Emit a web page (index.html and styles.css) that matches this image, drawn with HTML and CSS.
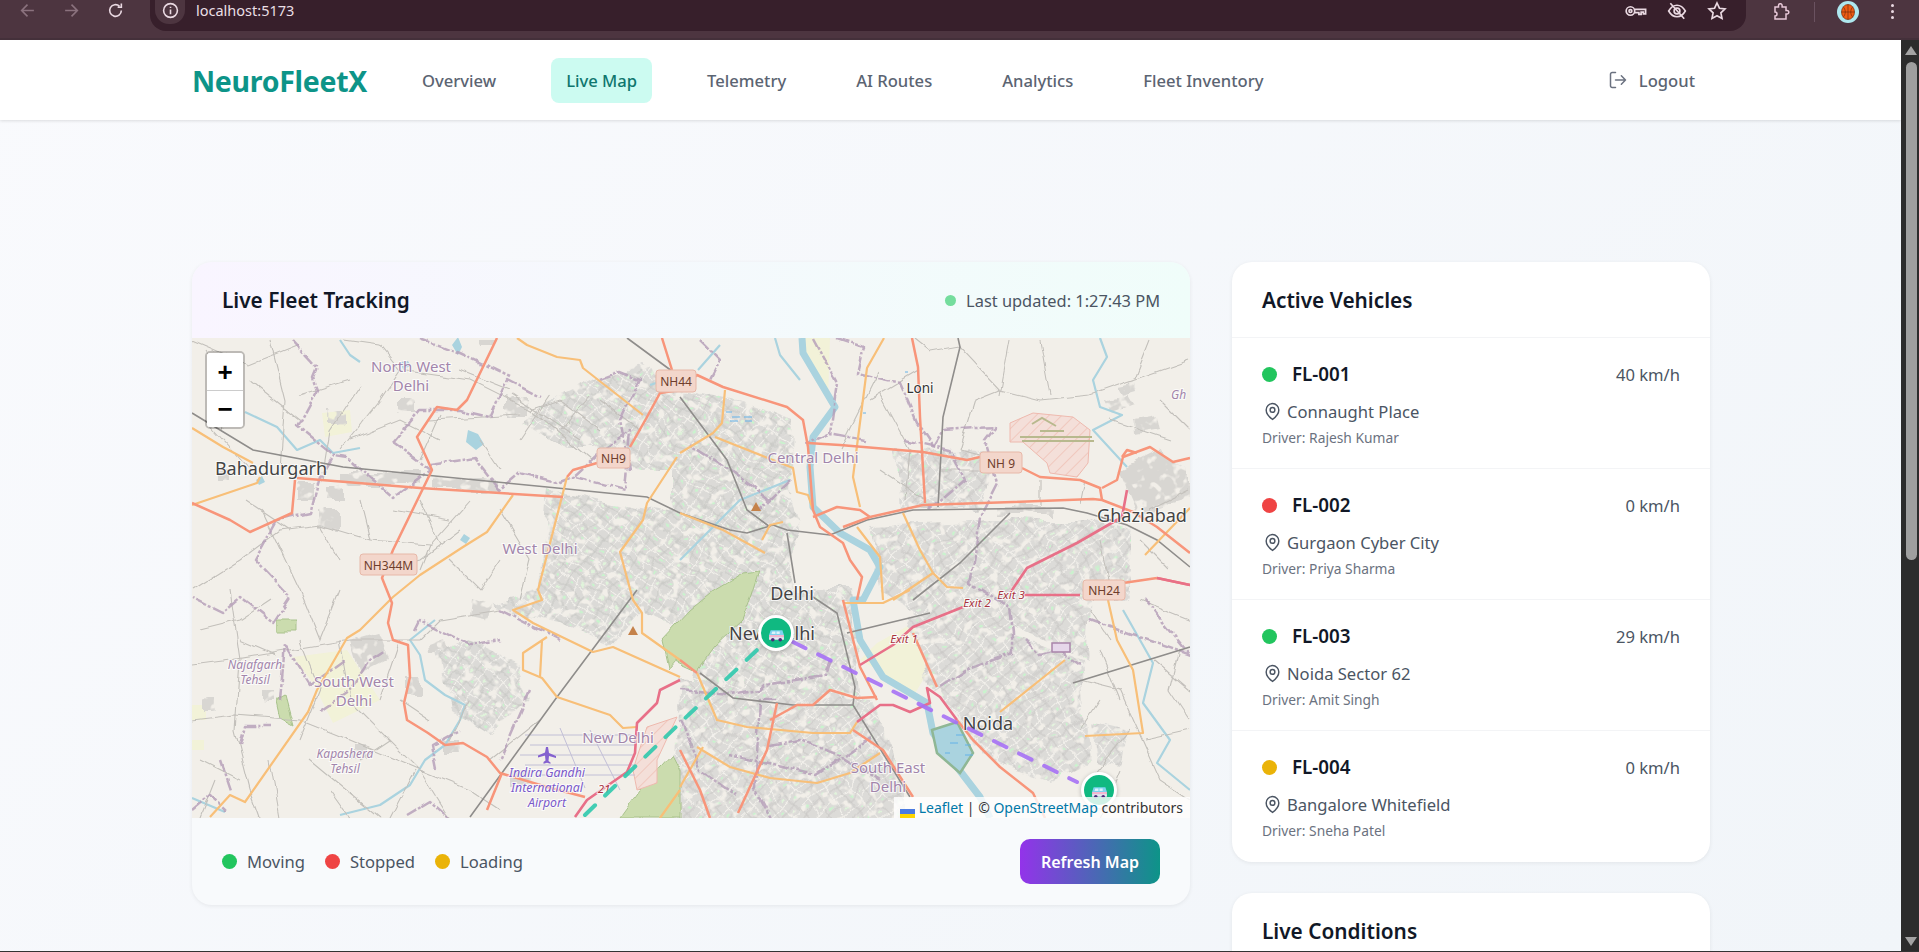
FILE: index.html
```html
<!DOCTYPE html>
<html lang="en">
<head>
<meta charset="utf-8">
<title>NeuroFleetX</title>
<link rel="stylesheet" href="styles.css">
</head>
<body>
<div class="window">
  <div class="browser">
    <div class="browser-nav">
      <svg class="b-icon dim" viewBox="0 0 16 16"><path d="M14 8H2.500M8 2.500 2.500 8 8 13.500"/></svg>
      <svg class="b-icon dim" viewBox="0 0 16 16"><path d="M2 8h11.500M8 2.500 13.500 8 8 13.500"/></svg>
      <svg class="b-icon" viewBox="0 0 16 16"><path d="M13.500 8a5.500 5.500 0 1 1-1.700-4M13.500 1.500v3.500H10"/></svg>
    </div>
    <div class="omnibox">
      <span class="info-chip"><svg class="b-icon" viewBox="0 0 16 16"><circle cx="8" cy="8" r="6.500"/><path d="M8 7v4.500M8 4.400v1.200"/></svg></span>
      <span class="url">localhost:5173</span>
      <span class="omni-icons">
        <svg class="b-icon key" viewBox="0 0 20 16"><circle cx="5.500" cy="8" r="3.800"/><circle cx="5.500" cy="8" r="1.300"/><path d="M9.300 6.500H19v4h-2V9h-2v2h-2V9.500H9.300"/></svg>
        <svg class="b-icon wide" viewBox="0 0 18 18"><path d="M1.500 9S4.500 3.800 9 3.800 16.500 9 16.500 9 13.500 14.200 9 14.200 1.500 9 1.500 9ZM3 2l12.500 14"/><circle cx="9" cy="9" r="2.600"/></svg>
        <svg class="b-icon wide" viewBox="0 0 18 18"><path d="m9 1.800 2.200 4.700 5 .6-3.700 3.500 1 5.100L9 13.200l-4.500 2.500 1-5.100L1.800 7.100l5-.6Z"/></svg>
      </span>
    </div>
    <div class="browser-right">
      <svg class="b-icon pinkish" viewBox="0 0 18 18"><path d="M3 4h3.500V2.500a1.800 1.800 0 0 1 3.600 0V4H14v3.500h1a1.800 1.800 0 0 1 0 3.600h-1V16H3v-3a2 2 0 0 0 0-4Z"/></svg>
      <span class="b-divider"></span>
      <span class="avatar"><svg class="ball" viewBox="0 0 14 16"><ellipse cx="7" cy="8" rx="6.500" ry="7.500"/><path d="M.5 8h13M7 .5v15M2 2.800c3 2.500 3 7.900 0 10.400M12 2.800c-3 2.500-3 7.900 0 10.400"/></svg></span>
      <span class="kebab"><i></i><i></i><i></i></span>
    </div>
  </div>

  <div class="viewport">
    <div class="page">
      <nav class="topnav">
        <div class="nav-left">
          <span class="logo">NeuroFleetX</span>
          <div class="nav-links">
            <a class="nav-link">Overview</a>
            <a class="nav-link active">Live Map</a>
            <a class="nav-link">Telemetry</a>
            <a class="nav-link">AI Routes</a>
            <a class="nav-link">Analytics</a>
            <a class="nav-link">Fleet Inventory</a>
          </div>
        </div>
        <a class="nav-link logout">
          <svg class="logout-icon" viewBox="0 0 24 24"><path d="M9 21H5a2 2 0 0 1-2-2V5a2 2 0 0 1 2-2h4M16 17l5-5-5-5M21 12H9"/></svg>
          Logout
        </a>
      </nav>

      <main class="content">
        <section class="card map-card">
          <header class="map-head">
            <h2 class="card-title">Live Fleet Tracking</h2>
            <div class="updated"><span class="pulse"></span>Last updated: 1:27:43 PM</div>
          </header>
          <div class="map">
            <svg class="map-svg" viewBox="192 338 998 480" preserveAspectRatio="none">
              <defs>
                <pattern id="city" width="19" height="15" patternUnits="userSpaceOnUse" patternTransform="rotate(38)">
                  <rect width="19" height="15" fill="#dbdad7"/>
                  <path d="M0 .5h19M.5 0v15" stroke="#f3f1ec" stroke-width="1.200"/>
                  <path d="M0 8h19M10 0v15" stroke="#c2c1be" stroke-width=".8"/>
                  <rect x="13" y="3" width="3" height="2" fill="#c9f3cd"/>
                  <rect x="4" y="10" width="3" height="3" fill="#dff3da"/>
                </pattern>
                <pattern id="city2" width="21" height="16" patternUnits="userSpaceOnUse" patternTransform="rotate(-42)">
                  <rect width="21" height="16" fill="#dcdbd8"/>
                  <path d="M0 .5h21M.5 0v16" stroke="#f3f1ec" stroke-width="1.200"/>
                  <path d="M11 0v16M0 8h21" stroke="#c3c2bf" stroke-width=".8"/>
                  <rect x="15" y="4" width="3" height="2" fill="#c9f3cd"/>
                  <rect x="4" y="11" width="3" height="2" fill="#dff3da"/>
                </pattern>
                <pattern id="hatch" width="9" height="9" patternUnits="userSpaceOnUse" patternTransform="rotate(-45)">
                  <rect width="9" height="9" fill="#f4dfd9"/>
                  <path d="M0 .5h9" stroke="#f0c8be" stroke-width="1"/>
                </pattern>
                <filter id="soft" x="0" y="0" width="100%" height="100%"><feGaussianBlur stdDeviation=".5"/></filter>
                <filter id="organic" x="0" y="0" width="100%" height="100%" color-interpolation-filters="sRGB">
                  <feTurbulence type="fractalNoise" baseFrequency=".03" numOctaves="3" seed="7" result="n"/>
                  <feDisplacementMap in="SourceGraphic" in2="n" scale="16" xChannelSelector="R" yChannelSelector="G" result="moved"/>
                  <feTurbulence type="fractalNoise" baseFrequency=".11" numOctaves="2" seed="11" result="holes"/>
                  <feColorMatrix in="holes" type="matrix" values="0 0 0 0 0  0 0 0 0 0  0 0 0 0 0  7 0 0 0 -2.100" result="mask"/>
                  <feComposite in="moved" in2="mask" operator="in"/>
                  <feGaussianBlur stdDeviation=".55"/>
                </filter>
                <filter id="wobble" x="0" y="0" width="100%" height="100%">
                  <feTurbulence type="fractalNoise" baseFrequency=".05" numOctaves="2" seed="3" result="n"/>
                  <feDisplacementMap in="SourceGraphic" in2="n" scale="7" xChannelSelector="R" yChannelSelector="G"/>
                  <feGaussianBlur stdDeviation=".45"/>
                </filter>
              </defs>
              <rect class="land" x="192" y="338" width="998" height="480"/>
              <g filter="url(#soft)">
                <g class="farm">
                  <path d="M293 657 347 650 380 700 333 723 313 683Z"/>
                  <path d="M322 413 350 410 352 432 325 437Z"/>
                  <path d="M192 705h14v15h-14ZM192 740h12v10h-12Z"/>
                  <path d="M800 338 830 338 828 400 815 380Z"/>
                  <path d="M860 660 877 643 913 623 927 673 913 697 883 673Z"/>
                </g>
              </g>
              <g filter="url(#organic)">
                <g class="solid">
                  <path d="M297 480h16v20h-16ZM328 483h18v16h-18ZM343 472h77v14h-77ZM433 480h67v10h-67ZM317 510h20v20h-20ZM478 340h16v10h-16Z"/>
                  <path d="M1120 470 1160 450 1190 470 1190 500 1140 515Z"/>
                  <path d="M1000 507h50v8h-50ZM505 394h22v18h-22ZM398 400h16v10h-16ZM328 410h16v14h-16Z"/>
                  <path d="M1105 400l22-6 6 10-22 8ZM1133 420l22-4 3 14-24 4ZM1117 385l16-3 2 8-14 4Z"/>
                  <path d="M220 470h10v10h-10ZM202 700h14v14h-14ZM263 690h12v12h-12ZM350 745h14v14h-14ZM444 738h16v14h-16ZM510 770h20v16h-20ZM407 675h16v20h-16Z"/>
                  <path d="M350 640l28-8 10 28-28 14ZM470 600l20 6-4 16-18-4ZM430 642l16-6 3 14-18 3Z"/>
                </g>
                <g class="urban">
                  <path d="M520 420 560 395 600 375 640 365 680 385 680 470 640 470 600 450 565 450Z"/>
                  <path d="M548 490 680 515 680 590 600 600 540 590Z"/>
                  <path d="M540 590 680 590 680 625 640 610 610 645 560 620 490 605Z"/>
                  <path d="M437 650 465 640 520 665 530 700 490 735 450 710Z"/>
                  <path d="M670 385 740 400 792 420 790 500 800 530 790 560 800 590 850 590 860 700 690 700 700 650 680 640 670 600 670 500Z"/>
                </g>
                <g class="urban2">
                  <path d="M680 680 870 700 905 790 905 830 670 830Z"/>
                  <path d="M935 650 1000 630 1080 660 1090 760 1050 780 990 760 945 705Z"/>
                  <path d="M870 525 1000 520 1090 520 1130 530 1130 600 1090 600 1085 660 1000 620 915 610 880 590Z"/>
                  <path d="M895 450 1000 455 980 510 900 510Z"/>
                  <path d="M1090 720l40 10-8 40-26-6Z"/>
                  <path d="M920 600 1010 610 1012 655 970 665 935 690 910 630Z"/>
                </g>
              </g>
              <g filter="url(#wobble)">
                <g class="forest">
                  <path d="M760 570 752 595 742 620 715 645 697 670 675 660 668 668 662 640 690 610 715 590 745 572Z"/>
                  <path d="M640 790 672 755 680 770 680 818 620 818Z"/>
                  <path d="M276 700 285 695 293 725 280 718ZM276 620h20v12h-20Z"/>
                </g>
              </g>
              <g filter="url(#soft)">
                <g class="hatch-zone">
                  <path d="M1010 423 1033 413 1073 417 1090 430 1088 463 1077 477 1050 473 1047 463 1023 442 1010 442Z"/>
                  <path d="M637 757 647 727 677 717 657 760 657 783 637 790 633 770Z"/>
                </g>
                <g class="runway">
                  <path d="M1020 437h72M1022 441h72M1040 431h24M1032 424l10-6 14 8"/>
                </g>
                <g class="airport">
                  <path d="M525 735h115M530 745h105M520 755h115M525 765h110M535 775h100M590 730l30 60M560 728l25 60"/>
                </g>
                <g class="water">
                  <path d="M802 338 803 353 835 407 813 437 810 467 813 507 840 533 870 550 880 567 863 600 853 600 860 640 883 677 927 703 933 733 957 767 980 797 990 818"/>
                </g>
                <g class="water thin">
                  <path d="M1100 338 1107 357 1093 380 1100 407 1122 415 1093 430 1127 467M1123 610 1153 663 1143 703 1170 740 1157 763 1190 790"/>
                  <path d="M245 412 277 427 297 450 320 440 333 453 360 448M192 798 225 812M340 815 380 805 410 785 425 760 445 745 460 720 465 705 445 695 425 680 420 655 410 640 435 620"/>
                  <path d="M698 370 720 345M775 338 780 355 800 380M650 385 680 375M340 340 350 355 360 362M680 560 740 500 790 480"/>
                </g>
                <path class="lake" d="M932 730 957 722 973 753 960 773 937 753Z"/>
                <g class="ponds">
                  <path d="M468 430l10 4 6 10-8 6-10-8ZM400 362l8-1 3 5-8 3ZM452 345l6-8 4 10-4 8ZM460 540l4-6 6 4-4 6ZM256 480l6-4 3 6-6 3Z"/>
                </g>
                <g class="dashes">
                  <path d="M726 412h6M732 417h8M744 417h8M730 421h8M745 421h7M956 735h8M950 743h8M965 745h6M945 753h5M965 755h8M905 372h3M863 413h3"/>
                </g>
              </g>
              <g filter="url(#wobble)">
                <g class="minor">
                  <path d="M192 340 250 365 300 345M270 340 285 400 280 470M345 340 380 345 400 370 470 380 530 410 590 460M400 370 380 400 340 450M300 395 350 380M360 385 330 430 322 480M440 415 420 460M430 420 520 415M512 395 580 440M530 410 560 400 600 430M520 440 550 395M460 370 510 390M600 400 640 430M560 430 590 395"/>
                  <path d="M193 590 240 560 280 530 320 525 370 540 430 545 470 500M262 510 300 590 320 640 340 590M320 525 340 560M430 545 420 570M380 570 420 560 460 530M245 500 290 530M205 420 250 470M205 350 230 390 222 430M250 380 300 420M350 440 400 420 440 440M360 500 370 540M420 500 440 545M480 440 500 470M500 510 530 560 520 600M450 560 480 590 500 560M395 510 450 520"/>
                  <path d="M192 665 230 660 290 650 350 640 420 640 440 620 500 610M230 590 240 660 235 730 250 790 260 818M192 720 235 715 300 720 350 740 420 770 470 790 500 810M340 640 350 700 420 770 450 818M310 760 340 785 380 818M200 760 240 780M275 655 240 640M380 700 400 640M450 740 470 700M540 720 490 760M415 770 390 818M200 630 240 620 270 600M300 640 320 690 300 740M270 760 280 818M360 760 390 740M400 700 430 720M215 780 200 818M330 790 350 818"/>
                  <path d="M915 338 930 350 958 345 1000 390 1040 400 1090 395 1190 360M1000 390 975 400 960 450M870 400 920 370M840 450 880 370M880 395 910 450 905 500M960 450 1000 460M1040 480 1040 505M1085 480 1080 505M940 470 985 470M880 470 925 500M1000 395 1010 340M1040 340 1050 395M1150 340 1135 378M1110 420 1170 440M1160 400 1190 430"/>
                  <path d="M1080 680 1120 690 1160 780 1190 800M1180 650 1170 690 1190 720M1130 730 1090 780M1100 650 1120 700M1155 660 1190 690M1120 770 1100 818M1150 510 1190 490M1140 540 1170 570M1100 540 1110 590M1140 600 1190 620M1090 610 1110 640M1145 740 1190 730M1100 700 1080 730"/>
                </g>
                <g class="admin">
                  <path d="M292 340 317 367 313 377 318 390 298 427 333 455 320 477 310 513 277 520 255 560 290 597 273 623 240 597 222 612 192 597"/>
                  <path d="M393 443 430 470 393 497 347 457 333 455M393 443 420 410 460 410 490 417 507 380 540 397M420 338 460 353 510 377"/>
                  <path d="M430 465 475 458 500 490 520 473 560 483 575 477 625 490 630 430 600 452 570 480M600 380 620 372 640 380 620 420 630 470"/>
                  <path d="M837 338 863 347 857 373 900 383 917 423 933 447 943 430 995 427 985 440 997 483 980 517 973 570 970 583 1010 607 1013 633 1013 653 967 670 940 687"/>
                  <path d="M813 338 837 383 830 433M865 440 830 433 805 445M700 340 720 360 710 380M770 500 730 470 690 445M905 440 950 450 965 480 930 510M790 480 760 510"/>
                  <path d="M437 770 432 745 460 730M220 760 230 790M240 745 245 725 270 725M280 700 285 645 310 685 345 660M320 710 350 690 370 660 385 650M415 630 420 620 470 645 500 640M500 610 560 640M530 690 500 760"/>
                  <path d="M680 690 730 695 760 690 765 685 825 675 830 660M775 700 760 700 755 790 770 818M680 720 700 770 735 795M770 745 800 740 840 755 880 780M872 738 815 775 730 755"/>
                  <path d="M192 810 210 795 225 810M405 815 430 800 450 818M1025 640 1040 655 1060 650 1080 665M1090 620 1190 655 1145 600"/>
                </g>
              </g>
              <g filter="url(#soft)">
                <path class="box" d="M1052 643h18v9h-18Z"/>
                <g class="rail">
                  <path d="M192 413 253 450 343 467 547 487 647 497 680 513 730 530 747 533 773 525 787 530 830 535 867 520 913 510 1063 508 1087 513 1127 525 1157 540 1190 567"/>
                  <path d="M680 397 727 460 747 510 770 527M627 338 680 377M787 533 795 583M813 597 837 613 855 687 853 705 793 705 733 698 700 673M847 633 930 613M853 705 910 797M1010 513 960 563 913 600M637 590 557 697 470 817M958 338 960 347 943 417 938 507"/>
                  <path d="M1073 683 1190 647"/>
                </g>
                <g class="lorange">
                  <path d="M192 428 223 447 253 463M192 505 257 483 260 477M517 338 527 345 557 357 580 360 583 368 643 415"/>
                  <path d="M513 495 487 532 463 547 420 575 393 597 360 630 347 638 317 690 308 712 245 802 230 795 210 817"/>
                  <path d="M567 477 538 590 542 600 513 610 533 623 593 652 613 647 680 677M547 637 523 653 523 670 542 678 557 697 610 715 623 728 637 727M542 640 540 677"/>
                  <path d="M677 457 647 503 643 520 620 552 633 600 642 613 642 633 680 660M884 338 867 368 853 477 860 507M725 390 722 423 713 433 680 453M715 437 793 468 797 492 808 495 813 510"/>
                  <path d="M680 513 723 530 765 553M762 540 770 525 783 522M903 513 920 550 933 573 947 587 963 588M933 573 893 600M857 527 880 557 883 600M843 603 883 603 910 590"/>
                  <path d="M697 673 717 720 747 727 813 733 850 733 857 722M697 747 730 767 770 778 817 783 850 773 880 753M1000 712 1065 660M1108 600 1117 640 1133 670 1143 733 1085 736M680 787 703 747M1190 508 1145 555M660 818 680 790"/>
                </g>
                <g class="salmon">
                  <path d="M497 338 467 400 457 410 437 407 417 437 432 470 393 550 382 578 392 603 388 623 393 640 408 645 410 677 404 703 407 720 428 733 445 745 463 743 487 757 500 773 547 787 585 797"/>
                  <path d="M297 478 420 488 563 497M295 480 292 513 250 532 230 520 192 503M567 477 573 470 597 463M630 447 647 417 660 393 680 390 697 375 723 387 787 407 803 420 808 447 813 510 820 527 843 543 850 560 862 577 857 600"/>
                  <path d="M662 338 672 370M808 443 840 445 923 452 967 460 980 457M1022 468 1040 477 1080 480 1100 488 1102 500M1102 488 1117 480 1123 457 1150 447 1173 462 1190 458M1122 457 1127 450 1137 453M912 338 918 367 920 417 925 503"/>
                  <path d="M843 527 870 517 923 505 1013 502 1093 499 1102 500 1133 512 1157 527 1190 553M813 517 837 507 860 510 870 517"/>
                  <path d="M770 720 797 705 813 705 830 690 857 698 877 697M738 813 767 750 777 703M843 600 860 667 877 700M913 633 937 687M853 730 883 750 913 797M957 720 973 740 1000 767 1033 793 1045 818M680 750 700 790 710 818M680 660 697 673M502 773 487 810M1157 578 1190 585M1123 583 1157 578"/>
                </g>
                <g class="pink">
                  <path d="M1127 490 1122 517 1077 543 1027 568 1010 593M1023 595 1080 595M963 607 913 627 893 645 860 665M857 722 880 705 893 705 910 712 930 703 927 688 940 697 957 720M575 817 587 800 627 772 635 753 637 723 657 703 660 690 680 680M1157 578 1190 585"/>
                </g>
              </g>

              <path class="peak" d="M756 502 761 511H751Z"/>
              <path class="peak" d="M633 626 638 635H628Z"/>
              <path class="plane" d="M546 747h2l1 6 7 3v2l-7-2-.5 5 2 1.500v1.200l-3.500-1-3.500 1V762l2-1.500-.5-5-7 2v-2l7-3Z"/>

              <g class="lbl place">
                <text x="271" y="475">Bahadurgarh</text>
                <text x="1142" y="522">Ghaziabad</text>
                <text x="792" y="600">Delhi</text>
                <text x="772" y="640">New Delhi</text>
                <text x="988" y="730">Noida</text>
              </g>
              <g class="lbl loni"><text x="920" y="393">Loni</text></g>
              <g class="lbl district">
                <text x="411" y="372">North West</text>
                <text x="411" y="391">Delhi</text>
                <text x="540" y="554">West Delhi</text>
                <text x="813" y="463">Central Delhi</text>
                <text x="354" y="687">South West</text>
                <text x="354" y="706">Delhi</text>
                <text x="888" y="773">South East</text>
                <text x="888" y="792">Delhi</text>
                <text x="618" y="743">New Delhi</text>
              </g>
              <g class="lbl tehsil">
                <text x="255" y="669">Najafgarh</text>
                <text x="255" y="684">Tehsil</text>
                <text x="345" y="758">Kapashera</text>
                <text x="345" y="773">Tehsil</text>
                <text class="start" x="1171" y="399">Gh</text>
              </g>
              <g class="lbl airport-lbl">
                <text x="547" y="777">Indira Gandhi</text>
                <text x="547" y="792">International</text>
                <text x="547" y="807">Airport</text>
              </g>
              <g class="lbl exit">
                <text x="904" y="643">Exit 1</text>
                <text x="977" y="607">Exit 2</text>
                <text x="1011" y="599">Exit 3</text>
                <text x="604" y="793">21</text>
              </g>

              <g class="shield">
                <rect x="656" y="370" width="40" height="22" rx="3"/><text x="676" y="386">NH44</text>
                <rect x="597" y="448" width="33" height="20" rx="3"/><text x="613.500" y="463">NH9</text>
                <rect x="980" y="452" width="42" height="21" rx="3"/><text x="1001" y="468">NH 9</text>
                <rect x="360" y="554" width="57" height="21" rx="3"/><text x="388.500" y="570">NH344M</text>
                <rect x="1083" y="580" width="42" height="20" rx="3"/><text x="1104" y="595">NH24</text>
              </g>

              <path class="route teal" d="M585 815 680 723 757 650"/>
              <path class="route violet" d="M793 642 1077 782"/>
            </svg>

            <div class="zoom-ctl">
              <button class="zoom-btn">+</button>
              <button class="zoom-btn">&#8722;</button>
            </div>

            <span class="pin pin-a">
              <svg class="bus" viewBox="0 0 16 16"><path class="bus-roof" d="M2.500 3h11l1.500 4.500H1Z"/><path class="bus-win" d="M4 4.200h3v2.300H3.300ZM8 4.200h3v2.300H8Z"/><path class="bus-band" d="M1 7.500h14v2H1Z"/><path class="bus-low" d="M1 9.500h14V12H1Z"/><circle class="bus-wheel" cx="4.500" cy="12" r="1.700"/><circle class="bus-wheel" cx="11.500" cy="12" r="1.700"/></svg>
            </span>
            <span class="pin pin-b">
              <svg class="bus" viewBox="0 0 16 16"><path class="bus-roof" d="M2.500 3h11l1.500 4.500H1Z"/><path class="bus-win" d="M4 4.200h3v2.300H3.300ZM8 4.200h3v2.300H8Z"/><path class="bus-band" d="M1 7.500h14v2H1Z"/><path class="bus-low" d="M1 9.500h14V12H1Z"/><circle class="bus-wheel" cx="4.500" cy="12" r="1.700"/><circle class="bus-wheel" cx="11.500" cy="12" r="1.700"/></svg>
            </span>

            <div class="attribution"><span class="flag"><i class="flag-b"></i><i class="flag-y"></i></span> <a class="attr-link">Leaflet</a> | © <a class="attr-link">OpenStreetMap</a> contributors</div>
          </div>
          <footer class="map-foot">
            <div class="legend">
              <span class="legend-item"><i class="dot green"></i>Moving</span>
              <span class="legend-item"><i class="dot red"></i>Stopped</span>
              <span class="legend-item"><i class="dot amber"></i>Loading</span>
            </div>
            <button class="refresh">Refresh Map</button>
          </footer>
        </section>

        <aside class="side">
          <section class="card vehicles">
            <h2 class="card-title side-head">Active Vehicles</h2>
            <article class="vehicle">
              <div class="v-top"><i class="dot green"></i><span class="v-id">FL-001</span><span class="v-speed">40 km/h</span></div>
              <div class="v-loc"><svg class="pin-icon" viewBox="0 0 24 24"><path d="M20 10c0 6-8 12-8 12s-8-6-8-12a8 8 0 0 1 16 0Z"/><circle cx="12" cy="10" r="3"/></svg>Connaught Place</div>
              <div class="v-driver">Driver: Rajesh Kumar</div>
            </article>
            <article class="vehicle">
              <div class="v-top"><i class="dot red"></i><span class="v-id">FL-002</span><span class="v-speed">0 km/h</span></div>
              <div class="v-loc"><svg class="pin-icon" viewBox="0 0 24 24"><path d="M20 10c0 6-8 12-8 12s-8-6-8-12a8 8 0 0 1 16 0Z"/><circle cx="12" cy="10" r="3"/></svg>Gurgaon Cyber City</div>
              <div class="v-driver">Driver: Priya Sharma</div>
            </article>
            <article class="vehicle">
              <div class="v-top"><i class="dot green"></i><span class="v-id">FL-003</span><span class="v-speed">29 km/h</span></div>
              <div class="v-loc"><svg class="pin-icon" viewBox="0 0 24 24"><path d="M20 10c0 6-8 12-8 12s-8-6-8-12a8 8 0 0 1 16 0Z"/><circle cx="12" cy="10" r="3"/></svg>Noida Sector 62</div>
              <div class="v-driver">Driver: Amit Singh</div>
            </article>
            <article class="vehicle">
              <div class="v-top"><i class="dot amber"></i><span class="v-id">FL-004</span><span class="v-speed">0 km/h</span></div>
              <div class="v-loc"><svg class="pin-icon" viewBox="0 0 24 24"><path d="M20 10c0 6-8 12-8 12s-8-6-8-12a8 8 0 0 1 16 0Z"/><circle cx="12" cy="10" r="3"/></svg>Bangalore Whitefield</div>
              <div class="v-driver">Driver: Sneha Patel</div>
            </article>
          </section>
          <section class="card conditions">
            <h2 class="card-title side-head plain">Live Conditions</h2>
          </section>
        </aside>
      </main>
    </div>
    <div class="scrollbar">
      <i class="arrow up"></i>
      <span class="thumb"></span>
      <i class="arrow down"></i>
    </div>
  </div>
  <div class="taskline"></div>
</div>
</body>
</html>
```

FILE: styles.css
```css
* { box-sizing: border-box; }
html, body { margin: 0; height: 100%; overflow: hidden; }
body { font-family: "Noto Sans", "Open Sans", sans-serif; color: #111827; }
.window { display: flex; flex-direction: column; height: 952px; width: 1919px; }

/* browser chrome */
.browser { height: 40px; flex: none; background: #4d3540; border-bottom: 2px solid #44303a; display: flex; align-items: flex-start; position: relative; }
.browser-nav { width: 150px; flex: none; display: flex; gap: 27px; padding: 2px 0 0 19px; }
.b-icon { width: 17px; height: 17px; fill: none; stroke: #ead9e2; stroke-width: 1.500; flex: none; }
.b-icon.dim { stroke: #8b727e; }
.b-icon.key { width: 23px; height: 18px; }
.b-icon.wide { width: 20px; height: 20px; }
.b-icon.pinkish { stroke: #e8c8d8; width: 18px; height: 18px; }
.omnibox { width: 1596px; height: 31px; flex: none; background: #371f2b; border-radius: 0 0 16px 16px; display: flex; align-items: flex-start; }
.info-chip { width: 30px; height: 28px; margin: -4px 0 0 5px; padding-top: 6px; border-radius: 0 0 14px 14px; background: #4d3540; display: flex; justify-content: center; flex: none; }
.url { margin: 0 0 0 11px; font-size: 14.500px; line-height: 21px; color: #eadfe5; }
.omni-icons { margin-left: auto; padding: 1px 19px 0 0; display: flex; align-items: center; gap: 20px; }
.browser-right { flex: 1; display: flex; align-items: center; padding: 1px 0 0 26px; height: 22px; }
.b-divider { width: 1px; height: 20px; background: #6a5260; margin-left: 24px; }
.avatar { width: 22px; height: 22px; border-radius: 50%; background: #aee8ef; margin-left: 22px; display: flex; align-items: center; justify-content: center; flex: none; }
.ball { width: 14px; height: 16px; fill: #ee5c14; stroke: #7a2c08; stroke-width: .7; }
.kebab { display: flex; flex-direction: column; gap: 3px; margin-left: 32px; }
.kebab i { width: 3px; height: 3px; border-radius: 50%; background: #ead9e2; }

/* page */
.viewport { flex: 1; min-height: 0; display: flex; }
.page { width: 1901px; flex: none; overflow: hidden; background: linear-gradient(135deg, #f9fafd 0%, #f1f5f9 100%); }
.topnav { height: 80px; background: #fff; box-shadow: 0 1px 3px rgba(0, 0, 0, .12); display: flex; align-items: center; justify-content: space-between; padding: 1px 191px 0 192px; position: relative; }
.nav-left { display: flex; align-items: center; gap: 40px; }
.logo { font-size: 28.500px; font-weight: 700; color: #0d9488; letter-spacing: -.3px; }
.nav-links { display: flex; gap: 40px; }
.nav-link { display: flex; align-items: center; height: 45px; padding: 0 15px; border-radius: 8px; font-size: 16.600px; font-weight: 500; color: #5b6472; margin-top: -1px; }
.nav-link.active { background: #ccfbf1; color: #0f766e; }
.logout { gap: 11px; }
.logout-icon { width: 20px; height: 20px; fill: none; stroke: #6b7280; stroke-width: 1.800; stroke-linecap: round; stroke-linejoin: round; }

.content { display: grid; grid-template-columns: 998px 478px; gap: 42px; padding: 142px 191px 0 192px; align-items: start; }
.card { background: #fff; border-radius: 20px; box-shadow: 0 1px 4px rgba(0, 0, 0, .07); overflow: hidden; }
.card-title { margin: 0; font-size: 20.800px; font-weight: 600; color: #111827; line-height: 28px; }

/* map card */
.map-card { height: 643px; display: flex; flex-direction: column; background: #f8fafc; }
.map-head { height: 76px; flex: none; padding: 0 30px; display: flex; align-items: center; justify-content: space-between; background: linear-gradient(90deg, #f9f5ff, #f0fdfa); }
.updated { display: flex; align-items: center; gap: 10px; font-size: 16.400px; color: #4b5563; }
.pulse { width: 11px; height: 11px; border-radius: 50%; background: #74dd9d; }
.map { height: 480px; flex: none; position: relative; overflow: hidden; }
.map-svg { display: block; width: 998px; height: 480px; }
.map-foot { flex: 1; display: flex; align-items: center; justify-content: space-between; padding: 0 30px; }
.legend { display: flex; gap: 20px; }
.legend-item { display: flex; align-items: center; gap: 10px; font-size: 16.600px; color: #4b5563; }
.dot { width: 15px; height: 15px; border-radius: 50%; display: block; flex: none; }
.green { background: #22c55e; }
.red { background: #ef4444; }
.amber { background: #eab308; }
.refresh { width: 140px; height: 45px; border: 0; border-radius: 10px; background: linear-gradient(90deg, #9333ea, #0d9488); color: #fff; font: 600 16px "Noto Sans", sans-serif; }

/* map vectors */
.land { fill: #f2efe9; }
.farm path { fill: #f2f2d8; }
.forest path { fill: #cbdcae; stroke: #a9c28d; stroke-width: 1; }
.solid path { fill: #d8d6d2; }
.urban path { fill: url(#city); }
.urban2 path { fill: url(#city2); }
.hatch-zone path { fill: url(#hatch); stroke: #eeb9ae; stroke-width: 1; }
.runway path, .airport path { fill: none; }
.runway path { stroke: #b8b98e; stroke-width: 2; }
.airport path { stroke: #c2bfd6; stroke-width: 1; }
.water path { fill: none; stroke: #aad3df; stroke-width: 7; stroke-linejoin: round; }
.water.thin path { stroke-width: 2.200; }
.lake { fill: #aad3df; stroke: #8fb795; stroke-width: 2.500; }
.ponds path { fill: #aad3df; }
.dashes path { fill: none; stroke: #62b2e8; stroke-width: 1; }
.minor path { fill: none; stroke: #c3c0bb; stroke-width: 1.100; }
.admin path { fill: none; stroke: #b49cb8; stroke-width: 2.500; stroke-dasharray: 12 2 3 2; stroke-linejoin: round; opacity: .8; }
.box { fill: #e6d7ea; stroke: #a985ab; stroke-width: 1.500; }
.rail path { fill: none; stroke: #8f8d8b; stroke-width: 1.600; }
.lorange path { fill: none; stroke: #f8bf78; stroke-width: 2.200; stroke-linejoin: round; }
.salmon path { fill: none; stroke: #f8957a; stroke-width: 2.500; stroke-linejoin: round; }
.pink path { fill: none; stroke: #e86f88; stroke-width: 2.600; stroke-linejoin: round; }
.peak { fill: #c5824a; }
.plane { fill: #8461cf; }
.lbl text { font-family: "Noto Sans", sans-serif; text-anchor: middle; paint-order: stroke; stroke: rgba(255, 255, 255, .75); stroke-width: 2px; }
.place text { font-size: 18px; fill: #444; }
.loni text { font-size: 13.500px; fill: #333; }
.district text { font-size: 15px; fill: #a285ab; }
.tehsil text { font-size: 12px; font-style: italic; fill: #a285ab; }
.tehsil text.start { text-anchor: start; }
.airport-lbl text { font-size: 12.300px; font-style: italic; fill: #7a58c9; }
.exit text { font-size: 11.500px; font-style: italic; fill: #a8343f; }
.shield rect { fill: #f3d6cb; stroke: #e7b8a8; stroke-width: 1; }
.shield text { font-family: "Noto Sans", sans-serif; font-size: 12px; fill: #6e3d2c; text-anchor: middle; }
.route { fill: none; stroke-width: 4; stroke-dasharray: 14 14; stroke-linecap: round; }
.teal { stroke: #2fc9ad; opacity: .9; }
.violet { stroke: #a671f5; opacity: .9; }

/* map overlays */
.zoom-ctl { position: absolute; left: 13px; top: 13px; width: 40px; border: 2px solid rgba(0, 0, 0, .22); border-radius: 5px; background-clip: padding-box; overflow: hidden; }
.zoom-btn { display: block; width: 100%; height: 37px; border: 0; background: #fff; padding: 0; font: 700 26px/34px "Liberation Sans", sans-serif; color: #000; }
.zoom-btn + .zoom-btn { border-top: 1px solid #ccc; }
.pin { position: absolute; width: 36px; height: 36px; border-radius: 50%; background: #10b981; border: 3px solid #fff; box-shadow: 0 1px 4px rgba(0, 0, 0, .25); display: flex; align-items: center; justify-content: center; }
.pin-a { left: 566px; top: 277px; }
.pin-b { left: 889px; top: 434px; }
.bus { width: 17px; height: 17px; margin-top: 4px; }
.bus-roof { fill: #7dd3f0; }
.bus-win { fill: #d9f3fb; }
.bus-band { fill: #f3b6cf; }
.bus-low { fill: #efe4f5; }
.bus-wheel { fill: #4a2a7a; }
.attribution { position: absolute; right: 0; bottom: 0; height: 21px; padding: 0 7px 0 6px; background: rgba(255, 255, 255, .8); font-size: 14px; line-height: 21px; color: #333; white-space: nowrap; }
.attr-link { color: #0078a8; }
.flag { display: inline-flex; flex-direction: column; width: 15px; height: 10px; vertical-align: -1px; }
.flag i { flex: 1; display: block; }
.flag-b { background: #4c7be1; }
.flag-y { background: #ffd500; }

/* side */
.side { display: flex; flex-direction: column; gap: 31px; }
.vehicles { height: 600px; }
.side-head { height: 76px; padding: 0 30px; display: flex; align-items: center; border-bottom: 1px solid #f3f4f6; }
.side-head.plain { border: 0; }
.vehicle { height: 131px; padding: 21px 30px 0; border-bottom: 1px solid #f3f4f6; }
.vehicle:last-child { border-bottom: 0; }
.v-top { display: flex; align-items: center; height: 30px; }
.v-id { margin-left: 15px; font-size: 18.800px; font-weight: 600; color: #111827; }
.v-speed { margin-left: auto; font-size: 16.600px; color: #4b5563; }
.v-loc { display: flex; align-items: center; gap: 5px; margin-top: 11px; height: 22px; padding-left: 1px; font-size: 16.600px; color: #4b5563; }
.pin-icon { width: 19px; height: 19px; fill: none; stroke: #4b5563; stroke-width: 1.800; stroke-linecap: round; stroke-linejoin: round; flex: none; }
.v-driver { margin-top: 6px; font-size: 13.800px; line-height: 20px; color: #6b7280; }
.conditions { height: 200px; }

.scrollbar { width: 18px; flex: none; background: #2c2c2c; display: flex; flex-direction: column; align-items: center; position: relative; }
.thumb { width: 11px; height: 498px; margin-top: 22px; margin-left: 3px; background: #9f9f9f; border-radius: 6px; }
.arrow { position: absolute; left: 4px; width: 0; height: 0; border-left: 6px solid transparent; border-right: 6px solid transparent; }
.arrow.up { top: 6px; border-bottom: 9px solid #a3a3a3; }
.arrow.down { bottom: 5px; border-top: 9px solid #a3a3a3; }
.taskline { height: 1px; flex: none; background: #333; }
```
